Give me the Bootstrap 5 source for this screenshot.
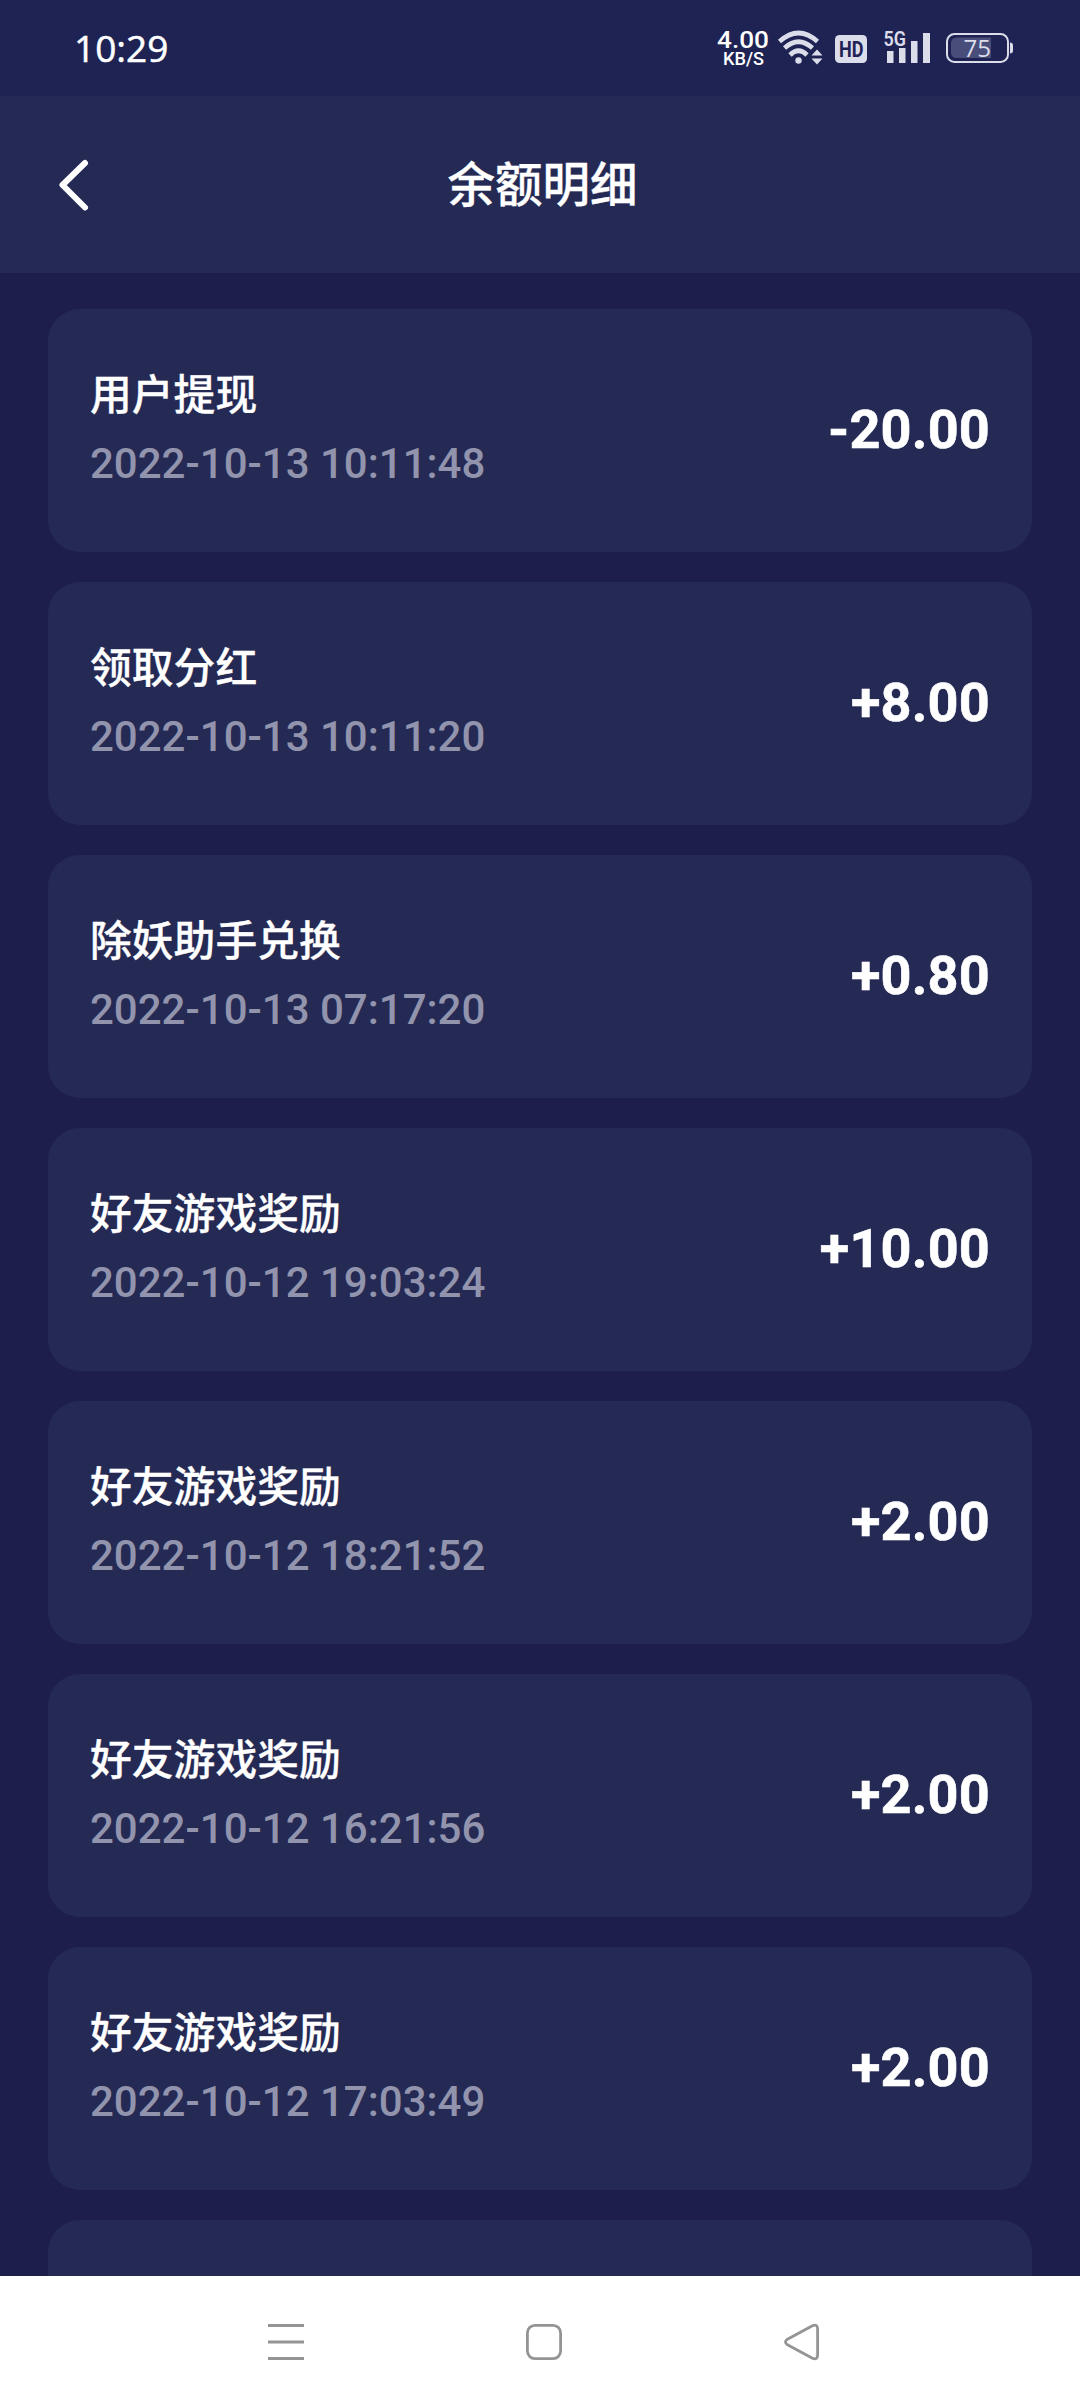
<!DOCTYPE html>
<html lang="zh-CN">
<head>
<meta charset="utf-8">
<meta name="viewport" content="width=device-width, initial-scale=1">
<title>余额明细</title>
<link href="https://cdn.jsdelivr.net/npm/bootstrap@5.3.0/dist/css/bootstrap.min.css" rel="stylesheet">
<style>
body{font-family:Roboto,"Noto Sans CJK SC",sans-serif;background:#1d1e4b;color:#fff;height:2408px}
.statusbar{height:96px;background:#1e2354;flex:none}
.clock{font:500 37px/96px "Open Sans",sans-serif;padding-left:74px;-webkit-text-stroke:.5px #fff}
.status-icons{width:340px;height:76px;margin:20px 40px 0 0}
.topbar{height:177px;background:#252a55;flex:none;padding-left:54px;padding-right:54px}
.topbar svg{width:40px;height:60px}
.page-title{font-size:47.5px;font-weight:500;line-height:70px;margin:2px 0 0 5px;-webkit-text-stroke:.3px #fff}
.records{padding:36px 48px 0;gap:30px;flex:1 1 0;min-height:0}
.record{height:243px;flex:none;background:#252a55;border-radius:32px;padding:0 42px}
.record-name{font-size:41.8px;font-weight:500;line-height:62px;height:62px;-webkit-text-stroke:.3px #fff}
.record-time{font-size:42px;font-weight:500;line-height:50px;margin-top:12px;color:#9294ad}
.record-text{padding-top:56px}
.amount{font-size:54px;font-weight:700;line-height:64px;margin-bottom:1px;-webkit-text-stroke:.6px #fff;letter-spacing:.2px}
.sysnav{height:132px;background:#fff;flex:none}
.sysnav svg{width:1080px;height:132px}
</style>
</head>
<body class="d-flex flex-column overflow-hidden m-0">
<header class="statusbar d-flex justify-content-between">
  <div class="clock">10:29</div>
  <svg class="status-icons" viewBox="0 0 340 76" fill="#dcddea">
    <g fill="#fff" font-family="Roboto, sans-serif" font-weight="500">
      <text x="17" y="28" font-size="24" textLength="52" lengthAdjust="spacingAndGlyphs">4.00</text>
      <text x="23" y="45" font-size="17.5" textLength="41" lengthAdjust="spacingAndGlyphs">KB/S</text>
    </g>
    <g fill="none" stroke="#dcddea" stroke-width="4.600">
      <path d="M79.500 21.500Q98.500 4.500 117.500 21.500"/>
      <path d="M84.500 28Q98.500 15.500 112.500 28"/>
      <path d="M90 35Q98.500 26.500 107 35"/>
    </g>
    <circle cx="98.500" cy="40.500" r="3.200"/>
    <path d="M111.500 35.500 117 29.500 122.500 35.500zM111.500 38.500h11L117 44.500z"/>
    <rect x="135" y="15" width="32" height="28" rx="4.500"/>
    <text x="139" y="37" font-family="Roboto, sans-serif" font-size="22" font-weight="700" fill="#1e2354" textLength="24.500" lengthAdjust="spacingAndGlyphs">HD</text>
    <text x="183.500" y="26" font-family="Roboto, sans-serif" font-size="20" font-weight="600" textLength="22.500" lengthAdjust="spacingAndGlyphs">5G</text>
    <path d="M187 31h6.500v12H187zM199 28h6.500v15H199zM211 21h6.500v22H211zM223 13h7v30h-7z"/>
    <rect x="247" y="14" width="61" height="28" rx="7.500" fill="none" stroke="#dcddea" stroke-width="2"/>
    <path d="M257 17.500h34v20.500h-34q-6 0-6-6v-8.500q0-6 6-6z" fill="#494d7a"/>
    <path d="M310 22.500q3 0 3 3v5q0 3-3 3z"/>
    <text x="263.500" y="37" font-family="Open Sans, sans-serif" font-size="23.500" textLength="27.500" lengthAdjust="spacingAndGlyphs">75</text>
  </svg>
</header>
<nav class="topbar d-flex align-items-center justify-content-between">
  <svg viewBox="0 0 40 60" fill="none" stroke="#fff" stroke-width="6" stroke-linecap="round" stroke-linejoin="round"><path d="M31 8 8.500 30 31 52.500"/></svg>
  <h1 class="page-title">余额明细</h1>
  <svg aria-hidden="true"></svg>
</nav>
<main class="records d-flex flex-column overflow-hidden">
  <section class="record d-flex justify-content-between align-items-center"><div class="record-text align-self-start"><div class="record-name">用户提现</div><div class="record-time">2022-10-13 10:11:48</div></div><div class="amount">-20.00</div></section>
  <section class="record d-flex justify-content-between align-items-center"><div class="record-text align-self-start"><div class="record-name">领取分红</div><div class="record-time">2022-10-13 10:11:20</div></div><div class="amount">+8.00</div></section>
  <section class="record d-flex justify-content-between align-items-center"><div class="record-text align-self-start"><div class="record-name">除妖助手兑换</div><div class="record-time">2022-10-13 07:17:20</div></div><div class="amount">+0.80</div></section>
  <section class="record d-flex justify-content-between align-items-center"><div class="record-text align-self-start"><div class="record-name">好友游戏奖励</div><div class="record-time">2022-10-12 19:03:24</div></div><div class="amount">+10.00</div></section>
  <section class="record d-flex justify-content-between align-items-center"><div class="record-text align-self-start"><div class="record-name">好友游戏奖励</div><div class="record-time">2022-10-12 18:21:52</div></div><div class="amount">+2.00</div></section>
  <section class="record d-flex justify-content-between align-items-center"><div class="record-text align-self-start"><div class="record-name">好友游戏奖励</div><div class="record-time">2022-10-12 16:21:56</div></div><div class="amount">+2.00</div></section>
  <section class="record d-flex justify-content-between align-items-center"><div class="record-text align-self-start"><div class="record-name">好友游戏奖励</div><div class="record-time">2022-10-12 17:03:49</div></div><div class="amount">+2.00</div></section>
  <section class="record"></section>
</main>
<footer class="sysnav">
  <svg class="d-block" viewBox="0 0 1080 132" fill="none" stroke="#949494" stroke-width="2.800" stroke-linejoin="round">
    <path d="M268 49.500h36M268 66h36M268 82.500h36"/>
    <rect x="527.400" y="49.400" width="33.200" height="33.200" rx="7.500"/>
    <path d="M787 63.500 812 50Q817.600 47.500 817.600 53V79Q817.600 84.500 812 82L787 68.500Q784 66 787 63.500z"/>
  </svg>
</footer>
<script src="https://cdn.jsdelivr.net/npm/bootstrap@5.3.0/dist/js/bootstrap.bundle.min.js"></script>
</body>
</html>
